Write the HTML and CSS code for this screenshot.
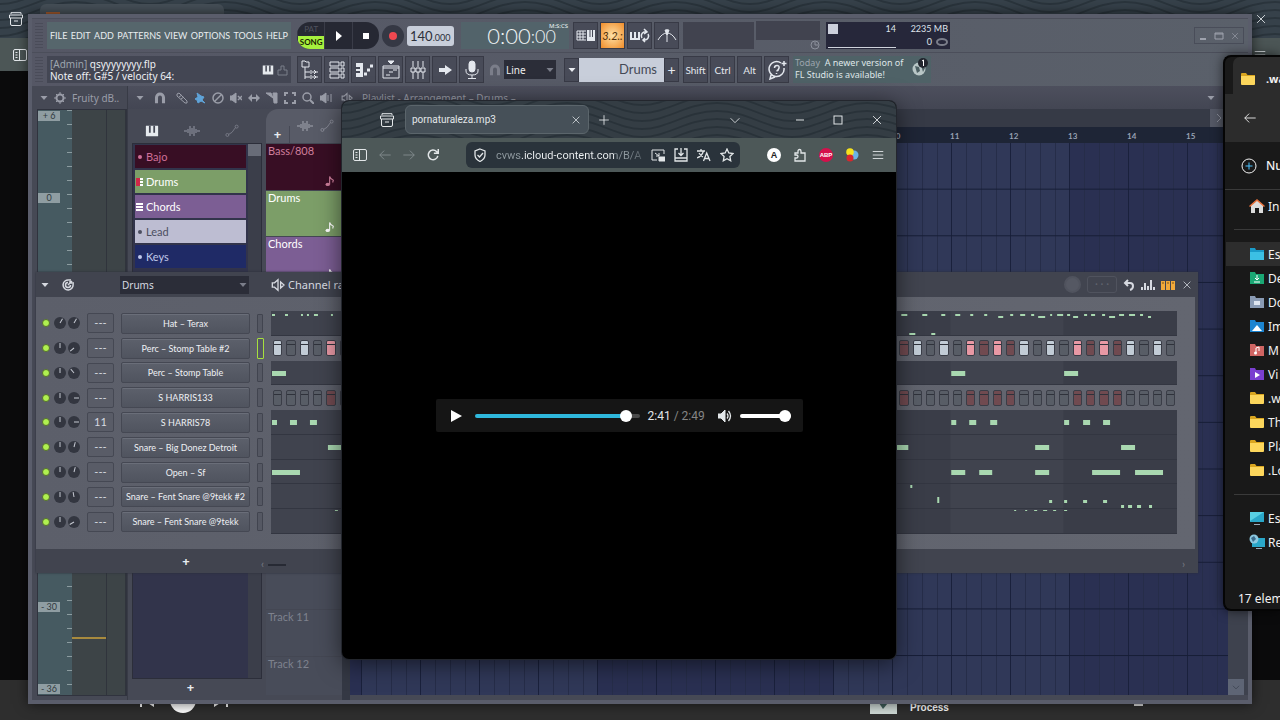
FILE: index.html
```html
<!DOCTYPE html>
<html lang="en">

<head>
    <meta charset="UTF-8">
    <meta name="viewport" content="width=device-width, initial-scale=1.0">
    <title>Desktop</title>
    <link rel="stylesheet" href="styles.css">
</head>

<body>
    <!-- shared icons -->
    <svg class="defs" aria-hidden="true">
        <defs>
            <pattern id="waves" width="150" height="38" patternUnits="userSpaceOnUse">
                <g fill="none" stroke="#222b32" stroke-width="2" opacity=".6">
                    <path d="M0 4C25 4 45-14 75-14S125 4 150 4M0 12C25 12 45-6 75-6S125 12 150 12M0 20C25 20 45 2 75 2S125 20 150 20M0 28C25 28 45 10 75 10S125 28 150 28M0 36C25 36 45 18 75 18S125 36 150 36M0 44C25 44 45 26 75 26S125 44 150 44M0 52C25 52 45 34 75 34S125 52 150 52" />
                </g>
            </pattern>
            <symbol id="i-archive" viewBox="0 0 16 16"><path d="M3 3V1.700h10V3M1.500 4h13v3h-13zM2.500 7v6q0 1.500 1.500 1.500h8q1.500 0 1.500-1.500V7M6 10h4" /></symbol>
            <symbol id="i-sidebar" viewBox="0 0 16 16"><rect x="1.500" y="2.500" width="13" height="11" rx="1.500" /><path d="M7.500 2.500v11M3.500 5.500h2M3.500 8h2M3.500 10.500h2" /></symbol>
            <symbol id="i-close" viewBox="0 0 16 16"><path d="M3.500 3.500l9 9M12.500 3.500l-9 9" /></symbol>
            <symbol id="i-menu" viewBox="0 0 16 16"><path d="M2 4h12M2 8h12M2 12h12" /></symbol>
            <symbol id="i-plus" viewBox="0 0 16 16"><path d="M8 2.500v11M2.500 8h11" /></symbol>
            <symbol id="i-left" viewBox="0 0 16 16"><path d="M14.500 8H2M7 3L2 8l5 5" /></symbol>
            <symbol id="i-right" viewBox="0 0 16 16"><path d="M1.500 8H14M9 3l5 5-5 5" /></symbol>
            <symbol id="i-down" viewBox="0 0 16 16"><path d="M3 6l5 5 5-5" /></symbol>
            <symbol id="i-caret" viewBox="0 0 16 16"><path d="M1 4h14l-7 8z" fill="currentColor" stroke="none" /></symbol>
            <symbol id="i-magnet" viewBox="0 0 16 16"><path d="M4 14V7.500a4 4 0 0 1 8 0V14" stroke-width="3.500" /></symbol>
            <symbol id="i-piano" viewBox="0 0 16 16"><path d="M1 2h14v12H1z" fill="currentColor" stroke="none" /><path d="M5.500 2v8M10.500 2v8" stroke="#444754" stroke-width="2" /></symbol>
            <symbol id="i-wave" viewBox="0 0 16 16"><path d="M0 8h3M13 8h3M4 6v4M6 3v10M8 5v6M10 3v10M12 6v4" stroke-width="1.500" /></symbol>
            <symbol id="i-auto" viewBox="0 0 16 16"><path d="M4 12q4-1 8-8" /><circle cx="2.700" cy="12.500" r="1.700" /><circle cx="13.300" cy="3" r="1.700" /></symbol>
            <symbol id="i-speaker" viewBox="0 0 16 16"><path d="M1.500 5.500H4L8 2v12L4 10.500H1.500zM11 4.500L15 8l-4 3.500z" stroke-width="1.500" /></symbol>
            <symbol id="i-note" viewBox="0 0 16 16"><ellipse cx="5" cy="12.500" rx="3" ry="2.300" fill="currentColor" stroke="none" /><path d="M7.500 12.500V2q1 3.500 5 5l-1 3" stroke-width="1.500" /></symbol>
            <symbol id="i-folder" viewBox="0 0 16 16"><path d="M1 3q0-1 1-1h4l1.500 2H15v9H1z" fill="#d9a520" stroke="none" /><path d="M1 5h14v8q0 1-1 1H2q-1 0-1-1z" fill="#fcd65c" stroke="none" /></symbol>
        </defs>
    </svg>

    <!-- browser at the back -->
    <div class="back">
        <header class="back-tabs">
            <svg class="waves"><rect width="100%" height="100%" fill="url(#waves)" /></svg>
            <svg class="icon i16 lit"><use href="#i-archive" /></svg>
            <span class="back-tab"><i></i></span>
            <button class="plain" aria-label="Close browser"><svg class="icon i14 lit"><use href="#i-close" /></svg></button>
        </header>
        <div class="back-nav">
            <svg class="icon i16 lit"><use href="#i-sidebar" /></svg>
            <svg class="icon i14 lit"><use href="#i-menu" /></svg>
        </div>
        <div class="back-page"></div>
        <footer class="back-player">
            <svg class="skip" viewBox="0 0 14 14"><path d="M0 0h2v14H0zM14 0v14L3 7z" fill="#fff" /></svg>
            <span class="disc"></span>
            <svg class="skip" viewBox="0 0 14 14"><path d="M12 0h2v14h-2zM0 0v14l11-7z" fill="#fff" /></svg>
            <svg class="cover" viewBox="0 0 27 27"><path d="M0 0h27v27H0z" fill="#cfdad6" /><path d="M9 16l4 6 5-6z" fill="#41605c" /></svg>
            <span class="song">Process</span>
            <span class="dash"></span>
        </footer>
    </div>

    <!-- FL Studio -->
    <main class="fl">
        <div class="toolbar">
            <div class="bar">
                <span class="grip"></span>
                <nav class="menu">
                    <button>FILE</button><button>EDIT</button><button>ADD</button><button>PATTERNS</button><button>VIEW</button><button>OPTIONS</button><button>TOOLS</button><button>HELP</button>
                </nav>
                <div class="transport">
                    <button class="mode"><span>PAT</span><b>SONG</b></button>
                    <button aria-label="Play"><svg class="i10" viewBox="0 0 10 10"><path d="M3 0l6 5-6 5z" fill="#fff" /></svg></button>
                    <button aria-label="Stop"><svg class="i10" viewBox="0 0 10 10"><path d="M2 2h6v6H2z" fill="#fff" /></svg></button>
                </div>
                <button class="record" aria-label="Record"><i></i></button>
                <div class="tempo">140<small>.000</small></div>
                <div class="clock">0:00<span>:00</span><sup>M:S:CS</sup></div>
                <div class="keys">
                    <button class="key" aria-label="Typing keyboard"><svg class="icon i20" viewBox="0 0 20 20"><path d="M1 5h9M1 8h9M1 11h9M1 14h9M1 5v9M4 5v9M7 5v9" /><path d="M11 4h8v11h-8z" fill="currentColor" stroke="none" /><path d="M14 4v7M16.500 4v7" stroke="#444754" /></svg></button>
                    <button class="key on" aria-label="Countdown">3.2.:</button>
                    <button class="key" aria-label="Loop record"><svg class="icon i20" viewBox="0 0 20 20"><path d="M1 6v7h8V6M5 6v7" stroke-width="2" /><path d="M12 12a4 4 0 0 1 2-6h2M18 8a4 4 0 0 1-3 6h-2M14 3l3 3-3 2M15 12l-2 2 2 2" stroke-width="1.500" /></svg></button>
                    <button class="key" aria-label="Metronome"><svg class="icon i20" viewBox="0 0 20 20"><path d="M1 14q4-7 9-7t9 7M10 3v13" /><path d="M8 4h4l-2 5z" fill="currentColor" /></svg></button>
                </div>
                <div class="scope"></div>
                <div class="scope-side"><span></span><svg class="icon i10" viewBox="0 0 10 10"><circle cx="5" cy="5" r="4" /><path d="M5 2v3h3" /></svg></div>
                <div class="cpu">
                    <span class="cpu-graph"><i></i><b>14</b></span>
                    <span class="cpu-mem"><b>2235 MB</b><b>0 <svg class="icon i12 dim" viewBox="0 0 12 12"><ellipse cx="6" cy="6" rx="5" ry="3" stroke-width="2" /></svg></b></span>
                </div>
                <div class="win-buttons">
                    <button aria-label="Minimize"><svg class="icon i10" viewBox="0 0 10 10"><path d="M2 8h6" stroke-width="2" /></svg></button>
                    <button aria-label="Maximize"><svg class="icon i10" viewBox="0 0 10 10"><path d="M1 2h8v6H1zM1 3h8" /></svg></button>
                    <button aria-label="Close"><svg class="icon i10"><use href="#i-close" /></svg></button>
                </div>
            </div>
            <div class="bar">
                <span class="grip"></span>
                <div class="hint">
                    <p><span>[Admin]</span> qsyyyyyyyy.flp<br>Note off: G#5 / velocity 64:</p>
                    <svg class="icon i12 lit"><use href="#i-piano" /></svg>
                    <svg class="icon i12 dim" viewBox="0 0 12 12"><path d="M2 11V6h3V2h3v4h3v5z" /></svg>
                </div>
                <div class="keys">
                    <button class="key" aria-label="Browser"><svg class="icon i20" viewBox="0 0 20 20"><path d="M2 1h3l1 1h3v5H2zM5 7v12M5 12h5M5 17h5M11 10v4M11 15v4M12 12h6M12 17h6M14 10l2 2-2 2M14 15l2 2-2 2" /></svg></button>
                    <button class="key" aria-label="Channel rack"><svg class="icon i20" viewBox="0 0 20 20"><path d="M3 2h9v4H3zM3 8h9v4H3zM3 14h9v4H3zM14 2h3v4h-3zM14 8h3v4h-3zM14 14h3v4h-3z" /></svg></button>
                    <button class="key" aria-label="Piano roll"><svg class="icon i20" viewBox="0 0 20 20"><path d="M2 3h7v14H2z" fill="currentColor" stroke="none" /><path d="M1 8h5M1 12h5" stroke="#444754" stroke-width="2" /><path d="M10 14h3M13 10h3M16 6h3" stroke-width="3" /></svg></button>
                    <button class="key" aria-label="Playlist"><svg class="icon i20" viewBox="0 0 20 20"><path d="M2 6h16v12H2zM2 8h16M5 15h4M8 12h4M12 10h4" /><path d="M7 1h6l-3 3z" fill="currentColor" /></svg></button>
                    <button class="key" aria-label="Mixer"><svg class="icon i20" viewBox="0 0 20 20"><path d="M5 1v6M5 12v7M10 1v6M10 12v7M15 1v6M15 12v7M3 8h4v4H3zM8 8h4v4H8zM13 8h4v4h-4z" /></svg></button>
                    <button class="key" aria-label="Next"><svg class="i20" viewBox="0 0 20 20"><path d="M4 8h6V5l7 5-7 5v-3H4z" fill="#e4e8ee" /></svg></button>
                    <button class="key" aria-label="Record audio"><svg class="icon i20" viewBox="0 0 20 20"><rect x="7" y="1" width="6" height="11" rx="3" fill="currentColor" /><path d="M4 9v2q0 4 6 4t6-4V9M10 15v3M6 18.500h8" /></svg></button>
                </div>
                <svg class="icon i14 dim"><use href="#i-magnet" /></svg>
                <div class="snap">
                    <select aria-label="Snap"><option>Line</option></select>
                    <svg class="i8"><use href="#i-caret" /></svg>
                </div>
                <div class="pattern">
                    <button aria-label="Pattern list"><svg class="i8"><use href="#i-caret" /></svg></button><span>Drums</span><button aria-label="Add pattern">+</button>
                </div>
                <div class="keys mods">
                    <button class="key">Shift</button>
                    <button class="key">Ctrl</button>
                    <button class="key">Alt</button>
                    <button class="key" aria-label="Help"><svg class="icon i20" viewBox="0 0 20 20"><path d="M14 3A7.500 7.500 0 1 0 17 8M4 15l-1 4 5-2M7.500 8q0-2.500 2.500-2.500T12 8t-2.500 3M9.500 13v1M17 1v5M14.500 3.500h5" stroke-width="1.500" /></svg></button>
                </div>
                <div class="news">
                    <p><span>Today</span>&nbsp; A newer version of<br>FL Studio is available!</p>
                    <svg class="i20" viewBox="0 0 20 20"><circle cx="8" cy="12" r="6.500" fill="#b8c6c6" /><path d="M4 9l4 1 1 4-3 2zM10 8l4 3-2 4z" fill="#4c5f62" /><circle cx="12" cy="6" r="5" fill="#22262e" /><path d="M11 4l1.500-1v6" stroke="#fff" fill="none" /></svg>
                </div>
            </div>
        </div>

        <div class="workspace">
            <section class="mixer">
                <header><svg class="i8"><use href="#i-caret" /></svg><svg class="icon i12" viewBox="0 0 12 12"><circle cx="6" cy="6" r="3.500" stroke-width="2" /><path d="M6 0v2M6 10v2M0 6h2M10 6h2M2 2l1 1M9 9l1 1M10 2L9 3M3 9l-1 1" /></svg>Fruity dB..</header>
                <div class="meter">
                    <ol><li>+ 6</li><li>0</li><li>- 6</li><li>- 12</li><li>- 18</li><li>- 24</li><li>- 30</li><li>- 36</li></ol>
                    <span class="level"><i></i></span>
                    <span class="level"></span>
                </div>
            </section>

            <section class="playlist">
                <header>
                    <svg class="i8"><use href="#i-caret" /></svg>
                    <svg class="icon i14"><use href="#i-magnet" /></svg>
                    <span class="tools">
                        <svg class="icon i12" viewBox="0 0 12 12"><path d="M1 2l2-1 8 8v2H9L1 4zM3 5l3-2M5 7l3-2" /></svg>
                        <svg class="icon i12 blue" viewBox="0 0 12 12"><path d="M3 1l4 3 3 1-2 3 3 3-4-2-3 2-1-3-2-1 3-2z" fill="currentColor" /></svg>
                        <svg class="icon i12" viewBox="0 0 12 12"><circle cx="6" cy="6" r="5" stroke-width="1.500" /><path d="M9.500 2.500l-7 7" stroke-width="1.500" /></svg>
                        <svg class="icon i12" viewBox="0 0 12 12"><path d="M0 4h2l4-3v10L2 8H0z" fill="currentColor" /><path d="M8 4l4 4M12 4L8 8" stroke-width="1.500" /></svg>
                        <svg class="icon i12" viewBox="0 0 12 12"><path d="M0 6l4-4v3h4V2l4 4-4 4V7H4v3z" fill="currentColor" stroke="none" /></svg>
                        <svg class="icon i12" viewBox="0 0 12 12"><path d="M0 1h5l2 5zM7 1h4v10H8z" fill="currentColor" /></svg>
                        <svg class="icon i12" viewBox="0 0 12 12"><path d="M1 4V1h3M8 1h3v3M11 8v3H8M4 11H1V8" stroke-width="2" /></svg>
                        <svg class="icon i12" viewBox="0 0 12 12"><circle cx="5" cy="5" r="4" stroke-width="1.500" /><path d="M8 8l4 4" stroke-width="2" /></svg>
                        <svg class="icon i12" viewBox="0 0 12 12"><path d="M0 4h2l4-3v10L2 8H0z" fill="currentColor" /><path d="M8 3v6M11 2v8" /></svg>
                    </span>
                    <svg class="icon i12"><use href="#i-speaker" /></svg>
                    <h2>Playlist - Arrangement – Drums –</h2>
                    <svg class="i8"><use href="#i-caret" /></svg>
                    <svg class="icon i10" viewBox="0 0 10 10"><path d="M1 3h8v6H1z" /></svg>
                </header>
                <div class="picker">
                    <div class="picker-tabs">
                        <svg class="icon i14 lit"><use href="#i-piano" /></svg>
                        <svg class="icon i16 dim"><use href="#i-wave" /></svg>
                        <svg class="icon i14 dim"><use href="#i-auto" /></svg>
                    </div>
                    <div class="picker-body">
                        <ul>
                            <li class="bajo"><i class="dot"></i>Bajo</li>
                            <li class="drums"><i class="roll"></i>Drums</li>
                            <li class="chords"><i class="roll"></i>Chords</li>
                            <li class="lead"><i class="dot"></i>Lead</li>
                            <li class="keys-p"><i class="dot"></i>Keys</li>
                        </ul>
                        <span class="picker-scroll"><i></i></span>
                    </div>
                    <div class="picker-foot"><button class="add" aria-label="Add pattern">+</button></div>
                </div>
                <div class="tracks">
                    <div class="track-tools"><button class="add" aria-label="Add track">+</button><svg class="icon i16"><use href="#i-wave" /></svg><svg class="icon i14"><use href="#i-auto" /></svg></div>
                    <ol id="tracks"></ol>
                </div>
                <div class="arrangement">
                    <div class="overview"><button aria-label="Scroll right"><svg class="icon i10" viewBox="0 0 10 10"><path d="M3 1l4 4-4 4" /></svg></button></div>
                    <div class="timeline" id="timeline"></div>
                    <div class="grid-area"><div class="bars"></div><div class="vscroll"><button aria-label="Scroll down"><svg class="icon i10"><use href="#i-down" /></svg></button></div></div>
                </div>
            </section>
        </div>
    </main>

    <!-- channel rack -->
    <section class="rack">
        <header>
            <svg class="i8"><use href="#i-caret" /></svg>
            <svg class="icon i12" viewBox="0 0 12 12"><path d="M7 1a5 5 0 1 0 4 4M6 3.500A2.500 2.500 0 1 0 8.500 6M6 6l4-4M8 0v4h4" stroke-width="1.500" /></svg>
            <div class="group">
                <select aria-label="Channel group"><option>Drums</option></select>
                <svg class="i8"><use href="#i-caret" /></svg>
            </div>
            <svg class="icon i14"><use href="#i-speaker" /></svg>
            <h2>Channel rack</h2>
            <div class="rack-tools">
                <span class="swing"></span>
                <span class="display">· · ·</span>
                <svg class="icon i12" viewBox="0 0 12 12"><path d="M3 4h4q3 0 3 3T7 11M5 1L2 4l3 3" stroke-width="2" /></svg>
                <svg class="icon i14" viewBox="0 0 14 14"><path d="M1 12V9M4 12V5M7 12V8M10 12V2M13 12V9" stroke-width="2" /></svg>
                <svg class="i14" viewBox="0 0 14 14"><path d="M0 3h4v9H0zM5 3h4v9H5zM10 3h4v9h-4z" fill="#f2a93a" /><path d="M1 5h2M6 5h2M11 5h2" stroke="#7c5417" /></svg>
                <button class="plain" aria-label="Close channel rack"><svg class="icon i12"><use href="#i-close" /></svg></button>
            </div>
        </header>
        <div class="channels" id="channels"></div>
        <footer><button class="add" aria-label="Add channel">+</button><span class="hprev">‹</span><span class="hbar"></span><span class="hnext">›</span></footer>
    </section>

    <!-- browser in front -->
    <section class="browser">
        <header class="tabs">
            <svg class="waves"><rect width="100%" height="100%" fill="url(#waves)" /></svg>
            <button class="plain" aria-label="Recent tabs"><svg class="icon i16"><use href="#i-archive" /></svg></button>
            <div class="tab"><span>pornaturaleza.mp3</span><button class="plain" aria-label="Close tab"><svg class="icon i12"><use href="#i-close" /></svg></button></div>
            <button class="plain" aria-label="New tab"><svg class="icon i14"><use href="#i-plus" /></svg></button>
            <span class="controls">
                <button class="plain list" aria-label="List tabs"><svg class="icon i14"><use href="#i-down" /></svg></button>
                <button class="plain" aria-label="Minimize window"><svg class="icon i12" viewBox="0 0 12 12"><path d="M2 6h8" /></svg></button>
                <button class="plain" aria-label="Maximize window"><svg class="icon i12" viewBox="0 0 12 12"><rect x="2" y="2" width="8" height="8" /></svg></button>
                <button class="plain" aria-label="Close window"><svg class="icon i14"><use href="#i-close" /></svg></button>
            </span>
        </header>
        <div class="nav">
            <button class="plain" aria-label="Sidebar"><svg class="icon i16"><use href="#i-sidebar" /></svg></button>
            <button class="plain off" aria-label="Back"><svg class="icon i14"><use href="#i-left" /></svg></button>
            <button class="plain off" aria-label="Forward"><svg class="icon i14"><use href="#i-right" /></svg></button>
            <button class="plain" aria-label="Reload"><svg class="icon i14" viewBox="0 0 16 16"><path d="M13.500 9A5.500 5.500 0 1 1 12 4l1.500 1.500M14 1v5H9" stroke-width="1.700" /></svg></button>
            <div class="url">
                <svg class="icon i14" viewBox="0 0 14 14"><path d="M7 1l5 2v4q0 4-5 6.500Q2 11 2 7V3zM4.500 7l2 2 3.500-4" stroke-width="1.300" /></svg>
                <input type="text" value="cvws.icloud-content.com/B/A" aria-label="Address">
                <svg class="icon i14" viewBox="0 0 14 14"><path d="M6 12H1V2h12v4M4 5l4 3M8 5v3H5" /><path d="M8 9h6v4H8z" fill="currentColor" /></svg>
                <svg class="icon i14" viewBox="0 0 14 14"><path d="M4 1H1v12h12V1h-3M7 0v7M4.500 5L7 7.500 9.500 5M1 10h12" stroke-width="1.300" /></svg>
                <svg class="icon i14" viewBox="0 0 14 14"><path d="M0 3h8M4 1v2M6.500 3Q5 8 0 10M2 5q2 3 4 4M6.500 13l3.200-8 3.300 8M8 10.500h4" stroke-width="1.300" /></svg>
                <svg class="icon i14" viewBox="0 0 14 14"><path d="M7 1l1.800 4 4.200.5-3.100 3 .8 4.300L7 10.700l-3.700 2.100.8-4.300L1 5.500 5.200 5z" stroke-width="1.300" /></svg>
            </div>
            <span class="ext">
                <span class="badge white">A</span>
                <svg class="icon i14" viewBox="0 0 14 14"><path d="M2 5h3V3a1.500 1.500 0 0 1 3 0v2h4v8H2v-3h1.500a1.500 1.500 0 0 0 0-3H2z" stroke-width="1.300" /></svg>
                <span class="badge red">ABP</span>
                <svg class="i14" viewBox="0 0 14 14"><circle cx="9" cy="7" r="4.500" fill="#6cb4e4" /><circle cx="5" cy="4" r="3.800" fill="#f6e21d" /><circle cx="5" cy="10" r="3.500" fill="#d8262c" /></svg>
                <svg class="icon i14"><use href="#i-menu" /></svg>
            </span>
        </div>
        <div class="page">
            <div class="player">
                <button class="plain" aria-label="Play audio"><svg class="i12" viewBox="0 0 12 12"><path d="M1 0l11 6-11 6z" fill="#fff" /></svg></button>
                <input type="range" class="seek" min="0" max="169" value="161" aria-label="Position">
                <span class="time">2:41 <i>/ 2:49</i></span>
                <button class="plain" aria-label="Mute"><svg class="icon i14" viewBox="0 0 14 14"><path d="M0 5h3l4-4v12L3 9H0z" fill="currentColor" /><path d="M9 4.500q2 2.500 0 5M10.500 2q4 5 0 10" stroke-width="1.300" /></svg></button>
                <input type="range" class="volume" min="0" max="100" value="100" aria-label="Volume">
            </div>
        </div>
    </section>

    <!-- file explorer -->
    <aside class="explorer">
        <div class="ex-tab"><svg class="i16"><use href="#i-folder" /></svg>.wa</div>
        <div class="ex-nav"><svg class="icon i14"><use href="#i-left" /></svg></div>
        <div class="ex-new"><svg class="icon i16" viewBox="0 0 16 16"><circle cx="8" cy="8" r="7" /><path d="M8 4.500v7M4.500 8h7" stroke="#4cc2ff" /></svg>Nu</div>
        <ul class="home">
            <li><svg class="i16" viewBox="0 0 16 16"><path d="M2 7l6-5 6 5v8h-4v-5H6v5H2z" fill="#dcdcdc" /><path d="M0 8l8-7 8 7-1 1-7-6-7 6z" fill="#e8703a" /></svg>Ini</li>
        </ul>
        <ul class="folders">
            <li class="sel"><svg class="i16" viewBox="0 0 16 16"><path d="M1 2h5l1 2h8v10H1z" fill="#1a9bc9" /><path d="M1 6h14v8H1z" fill="#3cc0e4" /></svg>Es</li>
            <li><svg class="i16" viewBox="0 0 16 16"><path d="M1 2h5l1 2h8v10H1z" fill="#1aa774" /><path d="M8 5v5M6 8l2 2 2-2M5 12h6" stroke="#fff" fill="none" /></svg>De</li>
            <li><svg class="i16" viewBox="0 0 16 16"><path d="M1 2h5l1 2h8v10H1z" fill="#8a9bb4" /><path d="M5 7h6v4H5z" fill="#dfe6f0" /></svg>Do</li>
            <li><svg class="i16" viewBox="0 0 16 16"><path d="M1 2h5l1 2h8v10H1z" fill="#1c84d0" /><path d="M3 13l5-6 5 6z" fill="#fff" /></svg>Im</li>
            <li><svg class="i16" viewBox="0 0 16 16"><path d="M1 2h5l1 2h8v10H1z" fill="#cf6563" /><path d="M7 11V6l3-1v4" stroke="#fff" fill="none" /><circle cx="6.500" cy="11" r="1.500" fill="#fff" /></svg>M</li>
            <li><svg class="i16" viewBox="0 0 16 16"><path d="M1 2h5l1 2h8v10H1z" fill="#7a3fd0" /><path d="M6 6l5 3-5 3z" fill="#fff" /></svg>Vi</li>
            <li><svg class="i16"><use href="#i-folder" /></svg>.w</li>
            <li><svg class="i16"><use href="#i-folder" /></svg>Th</li>
            <li><svg class="i16"><use href="#i-folder" /></svg>Pla</li>
            <li><svg class="i16"><use href="#i-folder" /></svg>.Lo</li>
        </ul>
        <ul class="devices">
            <li><svg class="i16" viewBox="0 0 16 16"><path d="M1 2h14v10H1z" fill="#2aa7c9" /><path d="M1 2h14l-14 9z" fill="#58d0e4" /><path d="M5 14h6v1H5z" fill="#9ab" /></svg>Es</li>
            <li><svg class="i16" viewBox="0 0 16 16"><path d="M3 4h13v9H3z" fill="#2aa7c9" /><circle cx="5" cy="5" r="4.500" fill="#8cc8e0" /><path d="M2 4l3-2 2 3-3 3z" fill="#3c6c8c" /><path d="M7 14h6v1H7z" fill="#9ab" /></svg>Re</li>
        </ul>
        <footer>17 elem</footer>
    </aside>

    <script src="script.js"></script>
</body>

</html>
```
FILE: styles.css
```css
* {
    box-sizing: border-box;
    margin: 0;
    padding: 0;
}

body {
    position: relative;
    height: 100vh;
    overflow: hidden;
    background: #0b0b0c;
    color: #d6d9e0;
    font-family: "Noto Sans", "Open Sans", sans-serif;
    font-size: 11px;
}

button,
select,
input {
    font: inherit;
    color: inherit;
    border: none;
    background: none;
}

ul,
ol {
    list-style: none;
}

svg {
    display: block;
    flex: none;
}

.defs {
    position: absolute;
    width: 0;
    height: 0;
}

.icon {
    fill: none;
    stroke: currentColor;
}

.i8 { width: 8px; height: 8px; }
.i10 { width: 10px; height: 10px; }
.i12 { width: 12px; height: 12px; }
.i14 { width: 14px; height: 14px; }
.i16 { width: 16px; height: 16px; }
.i20 { width: 20px; height: 20px; }
.lit { color: #e6eaee; }
.dim { color: #7b7e8a; }
.blue { color: #5fa3d8; }

.plain {
    display: flex;
    align-items: center;
    justify-content: center;
}

.waves {
    position: absolute;
    inset: 0;
    width: 100%;
    height: 100%;
    z-index: -1;
}

/* ---- browser at the back ---- */
.back {
    position: absolute;
    inset: 0;
    display: flex;
    flex-direction: column;
}

.back-tabs {
    position: relative;
    z-index: 0;
    display: flex;
    align-items: center;
    height: 38px;
    padding: 0 12px 0 8px;
    background: #36414a;
}

.back-tab {
    align-self: flex-end;
    width: 184px;
    height: 34px;
    margin: 0 auto 0 16px;
    padding: 8px 6px;
    border-radius: 6px;
    background: #465058;
}

.back-tab i {
    display: block;
    width: 14px;
    height: 10px;
    background: #a45a2c;
}

.back-nav {
    display: flex;
    align-items: center;
    justify-content: space-between;
    height: 33px;
    padding: 0 13px 0 12px;
    background: #4c5656;
}

.back-page {
    flex: 1;
}

.back-player {
    display: flex;
    align-items: center;
    height: 40px;
    padding-left: 140px;
    background: #2e2e2e;
    color: #fff;
}

.skip {
    width: 14px;
    height: 14px;
}

.disc {
    width: 26px;
    height: 26px;
    margin: 0 18px 0 16px;
    border-radius: 50%;
    background: #fff;
}

.cover {
    width: 27px;
    height: 27px;
    margin-left: 642px;
}

.song {
    margin-left: 13px;
    padding-top: 16px;
    font: bold 10px/16px "Liberation Sans", sans-serif;
}

.dash {
    width: 9px;
    height: 12px;
    margin-left: 185px;
    background: #ddd;
}

/* ---- FL Studio ---- */
.fl {
    position: absolute;
    inset: 14px 28px 16px;
    display: flex;
    flex-direction: column;
    padding: 4px;
    background: #5a5d6b;
    box-shadow: 0 0 12px rgba(0, 0, 0, .6);
    font-family: Lato, sans-serif;
}

.toolbar {
    background: linear-gradient(90deg, #555765, #5a606a);
}

.bar {
    display: flex;
    align-items: center;
    height: 34px;
    border: 1px solid #4b4e5a;
    border-width: 1px 0 0;
}

.grip {
    width: 8px;
    height: 26px;
    margin: 0 4px 0 3px;
    background: repeating-linear-gradient(#4a4c59 0 1px, transparent 1px 3px);
}

.menu,
.hint {
    display: flex;
    align-items: center;
    width: 244px;
    height: 27px;
    margin-right: 6px;
}

.menu {
    justify-content: space-between;
    padding: 0 3px;
    background: #56666c;
    font-size: 9px;
    color: #e8edef;
}

.hint {
    padding: 0 3px;
    gap: 2px;
    background: #434653;
    font: 10px/12px "Noto Sans", sans-serif;
    color: #eef0f4;
}

.hint p {
    flex: 1;
}

.hint span,
.news span {
    color: #9da5ae;
}

.transport {
    display: flex;
    width: 82px;
    height: 27px;
    overflow: hidden;
    border-radius: 13px;
    background: #262833;
}

.transport button {
    flex: 1;
    display: flex;
    align-items: center;
    justify-content: center;
    border-left: 1px solid #3a3c48;
}

.transport .mode {
    flex-direction: column;
    min-width: 0;
    font-size: 8px;
    line-height: 13px;
    color: #50535f;
}

.mode b {
    width: 100%;
    color: #162000;
    background: #a6f03e;
}

.record {
    display: grid;
    place-items: center;
    width: 22px;
    height: 22px;
    margin: 0 3px;
    border-radius: 50%;
    background: #353844;
}

.record i {
    width: 8px;
    height: 8px;
    border-radius: 50%;
    background: #f04850;
}

.tempo {
    width: 47px;
    height: 20px;
    margin-right: 7px;
    padding-left: 3px;
    border-radius: 3px;
    background: #c8ceda;
    color: #2c303a;
    font-size: 13px;
    line-height: 20px;
    white-space: nowrap;
}

.tempo small {
    font-size: 9px;
}

.clock {
    display: flex;
    align-items: center;
    justify-content: flex-end;
    width: 108px;
    height: 27px;
    margin-right: 4px;
    background: #52636a;
    color: #eef3f5;
    font-size: 22px;
    font-weight: 300;
}

.clock span {
    font-size: 18px;
}

.clock sup {
    align-self: flex-start;
    width: 12px;
    margin-right: 1px;
    font: 6px/8px "Noto Sans", sans-serif;
    direction: rtl;
    white-space: nowrap;
}

.keys {
    display: flex;
    gap: 2px;
    margin-right: 4px;
}

.key {
    display: grid;
    place-items: center;
    width: 25px;
    height: 27px;
    border: 1px solid #383a46;
    background: #484b58;
    color: #e4e8ee;
}

.key.on {
    background: radial-gradient(#ffe2a8, #f08c28);
    color: #543008;
    font-size: 11px;
    font-style: italic;
}

.scope {
    width: 71px;
    height: 27px;
    background: #41434f;
}

.scope-side {
    display: flex;
    flex-direction: column;
    align-items: flex-end;
    width: 64px;
    margin: 0 6px 0 2px;
    color: #8c919c;
}

.scope-side span {
    width: 100%;
    height: 19px;
    background: #41434f;
}

.cpu {
    display: flex;
    width: 124px;
    height: 27px;
    padding: 0 2px;
    background: #26273a;
    color: #dfe3ea;
    font-size: 9px;
    line-height: 14px;
}

.cpu b {
    display: flex;
    justify-content: flex-end;
    align-items: center;
    gap: 4px;
    height: 13px;
    font-weight: normal;
}

.cpu-graph {
    display: flex;
    justify-content: space-between;
    width: 68px;
    height: 26px;
    border-bottom: 1px solid #cfd3dc;
}

.cpu-graph i {
    width: 10px;
    height: 10px;
    margin-top: 2px;
    background: #ccd0dc;
}

.cpu-mem {
    flex: 1;
}

.win-buttons {
    display: flex;
    margin: 0 4px 0 auto;
    border: 1px solid #494d59;
    color: #9ea2ad;
}

.win-buttons button {
    display: grid;
    place-items: center;
    width: 16px;
    height: 15px;
}

.snap,
.group {
    display: flex;
    align-items: center;
    padding-right: 2px;
    background: #2b2d38;
    font: 10px "Noto Sans", sans-serif;
}

.snap {
    width: 52px;
    height: 19px;
    margin: 0 8px 0 2px;
    color: #eee;
}

.snap select,
.group select {
    flex: 1;
    min-width: 0;
    padding-left: 2px;
    appearance: none;
}

.snap svg,
.group svg {
    color: #7b7e8a;
}

.pattern {
    display: flex;
    height: 24px;
    margin-right: 4px;
    color: #e8ebf0;
    font-size: 14px;
}

.pattern button {
    display: grid;
    place-items: center;
    width: 15px;
    border: 1px solid #383a46;
    background: #484b58;
}

.pattern span {
    width: 85px;
    padding-right: 7px;
    background: #c8ceda;
    color: #444955;
    font-size: 13px;
    line-height: 23px;
    text-align: right;
}

.mods {
    font-size: 10px;
}

.news {
    display: flex;
    width: 138px;
    height: 27px;
    padding: 1px 0 0 2px;
    background: #4f6267;
    color: #dfe6e8;
    font: 9px/12px "Noto Sans", sans-serif;
    white-space: nowrap;
}

.news p {
    flex: 1;
    min-width: 0;
}

.workspace {
    flex: 1;
    min-height: 0;
    display: flex;
    background: #464955;
}

.mixer {
    display: flex;
    flex-direction: column;
    width: 96px;
    padding: 0 0 4px 5px;
    border-right: 1px solid #383b46;
}

.mixer header,
.playlist header {
    display: flex;
    align-items: center;
    height: 23px;
    gap: 6px;
    padding-left: 3px;
    color: #9a9da8;
    font: 10px "Noto Sans", sans-serif;
    white-space: nowrap;
}

.meter {
    flex: 1;
    display: flex;
    border: 1px solid #30333e;
}

.meter ol {
    display: flex;
    flex-direction: column;
    justify-content: space-between;
    width: 34px;
    padding: 1px 0;
    background: repeating-linear-gradient(#8c9ca0 0 1px, transparent 1px 14px) right / 5px 100% no-repeat, #465a61;
}

.meter li {
    width: 22px;
    background: #8f9da2;
    color: #303a40;
    font-size: 9px;
    line-height: 10px;
    text-align: center;
}

.level {
    position: relative;
    width: 35px;
    border-right: 1px solid #30343c;
    background: #3d4447;
}

.level i {
    position: absolute;
    top: 90%;
    width: 100%;
    height: 2px;
    background: #a88a3e;
}

.level:last-child {
    flex: 1;
}

.playlist {
    flex: 1;
    min-width: 0;
    display: grid;
    grid-template: 23px minmax(0, 1fr) / 138px 84px 1fr;
}

.playlist header {
    grid-column: 1 / -1;
    gap: 9px;
    padding: 0 14px 0 8px;
    background: linear-gradient(#4d4f5d, #434653);
}

.tools {
    display: flex;
    gap: 6px;
}

.playlist h2 {
    flex: 1;
    font-size: 10px;
    font-weight: normal;
}

.picker {
    display: flex;
    flex-direction: column;
    padding: 0 4px 4px;
}

.picker-tabs {
    display: flex;
    align-items: center;
    justify-content: space-around;
    height: 34px;
    padding: 10px 10px 0 0;
}

.picker-body {
    flex: 1;
    display: flex;
    background: #32344b;
    border: 1px solid #2c2e3a;
}

.picker-body ul {
    flex: 1;
    display: flex;
    flex-direction: column;
    gap: 2px;
    padding: 1px 2px;
}

.picker-body li {
    display: flex;
    align-items: center;
    gap: 4px;
    height: 23px;
    padding-left: 3px;
    font-size: 11px;
}

.dot {
    width: 4px;
    height: 4px;
    border-radius: 50%;
    background: currentColor;
}

.roll {
    width: 7px;
    height: 8px;
    margin: 0 -1px 0 -2px;
    background: repeating-linear-gradient(currentColor 0 2px, transparent 2px 3px);
}

.drums .roll {
    border-left: 4px solid #d02848;
}

.bajo { background: #380e24; color: #cf6f98; }
.drums { background: #7c9e68; color: #fff; }
.chords { background: #7c5e94; color: #fff; }
.lead { background: #bdbdd2; color: #4c4e60; }
.keys-p { background: #1f2a66; color: #c0c8ea; }

.picker-scroll {
    width: 13px;
    background: #3b3e4a;
}

.picker-scroll i {
    display: block;
    height: 12px;
    background: #686c78;
}

.picker-foot {
    display: flex;
    justify-content: center;
    padding-right: 13px;
}

.add {
    align-self: center;
    width: 24px;
    height: 17px;
    color: #e8ebf0;
    font: bold 13px/17px "Noto Sans", sans-serif;
}

.tracks {
    display: flex;
    flex-direction: column;
    min-height: 0;
    padding-bottom: 5px;
    border-right: 8px solid #343844;
}

.track-tools {
    display: flex;
    align-items: center;
    gap: 7px;
    height: 34px;
    border-radius: 12px 0 0;
    background: #585b67;
    color: #8b8e99;
}

.track-tools .add {
    align-self: flex-end;
    border-right: 1px solid #464955;
}

.tracks ol {
    flex: 1;
    min-height: 0;
    display: grid;
    grid-auto-rows: 8.45%;
    overflow: hidden;
    background: #484c59;
}

.tracks li {
    display: flex;
    justify-content: space-between;
    padding: 0 6px 3px 2px;
    border-top: 1px solid #444753;
    color: #7e828e;
    font-size: 11px;
}

.tracks li svg {
    align-self: flex-end;
}

.tracks .bass { background: #380e24; color: #cf7f9c; }
.tracks .drums { background: #7c9e68; color: #fff; }
.tracks .chords { background: #7c5e94; color: #fff; }

.arrangement {
    display: flex;
    flex-direction: column;
    min-width: 0;
    padding-bottom: 5px;
}

.overview {
    display: flex;
    justify-content: flex-end;
    height: 18px;
    padding-right: 20px;
    background: #363a46;
}

.overview button {
    display: grid;
    place-items: center;
    width: 18px;
    background: #545865;
    color: #888c98;
}

.timeline {
    display: flex;
    height: 16px;
    padding-left: 10px;
    overflow: hidden;
    background: #1e2536;
}

.timeline span {
    flex: none;
    width: 59px;
    color: #98a2b4;
    font: bold 8px/18px Lato, sans-serif;
}

.grid-area {
    flex: 1;
    display: flex;
}

.bars {
    flex: 1;
    background:
        linear-gradient(transparent calc(100% - 1px), #161d36 0) 0 0 / 100% 8.45%,
        linear-gradient(90deg, #1a213c 1px, transparent 0) 11px 0 / 59px 100%,
        repeating-linear-gradient(90deg, #262d49 0 1px, transparent 1px 15px) 11px 0 / 59px 100%,
        linear-gradient(90deg, #303858 50%, #2a3052 0) 11px 0 / 472px 100%;
}

.vscroll {
    display: flex;
    align-items: flex-end;
    width: 20px;
    padding-right: 4px;
    background: #3e424e;
}

.vscroll button {
    display: grid;
    place-items: center;
    width: 16px;
    height: 16px;
    background: #5e6575;
    color: #333a48;
}

/* ---- channel rack ---- */
.rack {
    position: absolute;
    inset: 272px 82px 147px 36px;
    display: flex;
    flex-direction: column;
    padding-right: 3px;
    background: #41444f;
    box-shadow: 0 0 2px #2b2d38;
    color: #d6d9e0;
    font-family: Lato, sans-serif;
}

.rack header {
    flex: none;
    display: flex;
    align-items: center;
    height: 25px;
    padding: 0 2px 0 5px;
}

.rack header > .i12 {
    margin-left: 13px;
}

.group {
    width: 129px;
    height: 18px;
    margin: 0 22px 0 46px;
}

.rack h2 {
    flex: 1;
    margin-left: 3px;
    font: 11px "Noto Sans", sans-serif;
}

.rack-tools {
    display: flex;
    align-items: center;
    gap: 6px;
}

.swing {
    width: 17px;
    height: 17px;
    border: 2px solid #50535e;
    border-radius: 50%;
    background: #555863;
}

.display {
    width: 30px;
    height: 17px;
    border: 1px solid #50535e;
    border-radius: 3px;
    color: #60636e;
    text-align: center;
}

.channels {
    flex: 1;
    min-height: 0;
    display: grid;
    grid-auto-rows: minmax(0, 1fr);
    padding: 14px 18px 15px 6px;
    background: linear-gradient(90deg, #5c5f6a, #636670);
}

.channel {
    display: grid;
    grid-template-columns: 38px 27px 129px 7px 1fr;
    grid-template-rows: 100%;
    column-gap: 7px;
    align-items: center;
}

.controls-l {
    display: flex;
    align-items: center;
    gap: 2px;
}

.led {
    width: 8px;
    height: 8px;
    margin-right: 2px;
    border: 1px solid #55702c;
    border-radius: 50%;
    background: #b0f050;
}

.knob {
    width: 12px;
    height: 12px;
}

.target {
    height: 20px;
    border: 1px solid #454853;
    border-radius: 2px;
    background: #595c67;
    line-height: 18px;
    text-align: center;
}

.name {
    height: 21px;
    overflow: hidden;
    border: 1px solid #454853;
    border-radius: 2px;
    background: linear-gradient(#5c606b, #50545f);
    box-shadow: inset 0 1px #6a6e79;
    font-size: 9px;
    line-height: 19px;
    white-space: nowrap;
    color: #eef0f4;
}

.slot {
    width: 6px;
    height: 19px;
    border: 1px solid #41444f;
    border-radius: 1px;
    background: #555863;
}

.slot.sel {
    width: 7px;
    height: 21px;
    border-color: #a6e03e;
}

.lane {
    width: 100%;
    height: 100%;
    overflow: hidden;
    border-bottom: 1px solid #333641;
    background: linear-gradient(90deg, #40434e 50%, #3a3d48 0) 0 0 / 25% 100%;
}

.steps {
    display: flex;
    align-items: center;
    height: 100%;
}

.steps input {
    flex: 1;
    min-width: 0;
    height: 16px;
    margin: 0 2px;
    appearance: none;
    border: 1px solid #3a3d47;
    border-radius: 2px;
    background: linear-gradient(transparent 3px, #2f323b 3px 4px, transparent 4px), #585d66;
}

.steps input:checked { background-color: #c2ccd6; }
.steps .alt { background-color: #704a50; }
.steps .alt:checked { background-color: #e898a4; }

.rack footer {
    flex: none;
    display: flex;
    align-items: center;
    height: 24px;
    padding-left: 138px;
    color: #777b86;
}

.hprev {
    margin: 4px 4px 0 63px;
}

.hbar {
    width: 18px;
    height: 2px;
    margin-top: 8px;
    background: #272a34;
}

.hnext {
    margin: 4px 10px 0 auto;
}

/* ---- browser in front ---- */
.browser {
    position: absolute;
    inset: 101px 384px 61px 342px;
    display: flex;
    flex-direction: column;
    overflow: hidden;
    border-radius: 7px;
    background: #000;
    box-shadow: 0 0 0 1px #23262d, 0 4px 24px rgba(0, 0, 0, .6);
    color: #e2e6e8;
    font-family: Roboto, sans-serif;
}

.tabs {
    position: relative;
    z-index: 0;
    display: flex;
    align-items: center;
    height: 37px;
    padding: 0 12px 0 37px;
    background: #343d44;
}

.tab {
    display: flex;
    align-items: center;
    justify-content: space-between;
    width: 184px;
    height: 29px;
    margin: 0 8px 0 10px;
    padding: 0 6px;
    border: 1px solid #5b656b;
    border-radius: 6px;
    background: #465058;
    font-size: 10px;
}

.controls {
    display: flex;
    gap: 26px;
    margin-left: auto;
}

.list {
    margin-right: 26px;
}

.nav {
    display: flex;
    align-items: center;
    gap: 10px;
    height: 34px;
    padding: 0 11px 0 10px;
    background: #4d5858;
}

.off {
    color: #858e90;
}

.url {
    display: flex;
    align-items: center;
    gap: 9px;
    width: 274px;
    height: 26px;
    margin-left: 16px;
    padding: 0 6px 0 7px;
    border-radius: 6px;
    background: #2a333b;
}

.url input {
    flex: 1;
    min-width: 0;
    font-size: 11px;
    color: transparent;
    background: linear-gradient(90deg, #909aa0 25px, #f0f3f5 25px 118px, #909aa0 118px 130px, #2a333b 156px);
    background-clip: text;
}

.ext {
    display: flex;
    align-items: center;
    gap: 12px;
    margin-left: auto;
}

.badge {
    width: 14px;
    height: 14px;
    border-radius: 50%;
    font: bold 9px/14px "Liberation Sans", sans-serif;
    text-align: center;
}

.white { background: #fff; color: #222; }
.red { background: #d5104c; color: #fff; font-size: 6px; }

.page {
    flex: 1;
    display: grid;
    place-items: center;
}

.player {
    display: flex;
    align-items: center;
    width: 367px;
    height: 33px;
    padding: 0 12px 0 14px;
    border-radius: 2px;
    background: #151515;
}

.player input {
    height: 12px;
    appearance: none;
}

.player input::-webkit-slider-runnable-track {
    height: 4px;
    border-radius: 2px;
    background: linear-gradient(90deg, #2fb8dc 92%, #4a4a4a 0);
}

.player .volume::-webkit-slider-runnable-track {
    background: #fff;
}

.player input::-webkit-slider-thumb {
    width: 12px;
    height: 12px;
    margin-top: -4px;
    appearance: none;
    border-radius: 50%;
    background: #fff;
}

.seek {
    width: 165px;
    margin: 0 8px 0 13px;
}

.time {
    flex: 1;
    font-size: 12px;
    white-space: nowrap;
}

.time i {
    font-style: normal;
    color: #858585;
}

.volume {
    width: 51px;
    margin-left: 8px;
}

/* ---- file explorer ---- */
.explorer {
    position: absolute;
    inset: 55px 0 109px 1223px;
    display: flex;
    flex-direction: column;
    overflow: hidden;
    border: 1px solid #050505;
    border-width: 2px 0 2px 2px;
    border-radius: 8px 0 0 8px;
    background: #191919;
    box-shadow: 0 0 12px rgba(0, 0, 0, .6);
    color: #f2f2f2;
    font-size: 12px;
    white-space: nowrap;
}

.ex-tab,
.ex-nav,
.ex-new,
.explorer li {
    display: flex;
    align-items: center;
}

.ex-tab {
    gap: 10px;
    height: 37px;
    margin-left: 8px;
    padding: 6px 0 0 7px;
    border-radius: 7px 0 0;
    background: #2c2c2c;
    font-size: 11px;
    font-weight: bold;
}

.ex-nav {
    height: 48px;
    padding-left: 18px;
    background: #2c2c2c;
}

.ex-new {
    gap: 9px;
    height: 48px;
    padding-left: 16px;
    border-bottom: 1px solid #3a3a3a;
    font-weight: 500;
}

.explorer li {
    gap: 3px;
    height: 24px;
    padding-left: 24px;
}

.home {
    height: 39px;
    padding: 4px 0;
}

.folders,
.devices {
    margin-left: 9px;
    padding: 12px 0;
    border-top: 1px solid #3a3a3a;
}

.explorer .folders li,
.explorer .devices li {
    padding-left: 15px;
}

.folders .sel {
    margin-left: -8px;
    background: #2d2d2d;
}

.explorer .folders .sel {
    padding-left: 23px;
}

.devices {
    padding-top: 11px;
}

.explorer footer {
    margin-top: auto;
    padding: 0 0 2px 13px;
}
```
FILE: script.js
```js
// notes are [x, y, width, height] on a 907 x 25 lane
const row = (y, h, ...pairs) => pairs.map(([x, w]) => [x, y, w, h]);

// a and b are the angles of the pan and volume knobs
const channels = [
    { name: 'Hat – Terax', a: 30, b: 30, notes: [
        ...row(3, 2, [1, 3], [14, 3], [30, 2], [36, 2], [43, 4], [60, 2], [631, 6], [652, 5], [671, 4], [685, 5], [700, 3], [714, 3], [740, 3], [750, 5], [761, 3], [780, 2], [787, 6], [797, 3], [814, 3], [821, 4], [832, 3], [849, 5], [859, 6], [870, 3]),
        ...row(5, 2, [728, 5], [768, 7], [803, 5], [839, 6], [878, 3]),
        ...row(22, 2, [639, 6], [661, 4])] },
    { name: 'Perc – Stomp Table #2', a: 0, b: 230, sel: true, steps: i => i % 2 === 0 },
    { name: 'Perc – Stomp Table', a: 0, b: 320, notes: row(10, 5, [1, 14], [681, 14], [794, 14]) },
    { name: 'S HARRIS133', a: 0, b: 90, steps: () => false },
    { name: 'S HARRIS78', a: 0, b: 90, to: '11', notes: row(10, 5, [1, 5], [19, 7], [39, 7], [681, 5], [699, 7], [720, 7], [794, 5], [813, 7], [833, 7]) },
    { name: 'Snare – Big Donez Detroit', a: 0, b: 15, notes: row(10, 5, [57, 14], [624, 14], [765, 14], [851, 14]) },
    { name: 'Open – Sf', a: 0, b: 15, notes: row(10, 5, [1, 28], [681, 14], [709, 13], [765, 14], [822, 28], [865, 28]) },
    { name: 'Snare – Fent Snare @9tekk #2', a: 0, b: 350, notes: [
        [640, 1, 2, 3], [667, 13, 2, 6],
        ...row(16, 3, [779, 3], [794, 3], [813, 4], [833, 4]),
        ...row(21, 3, [851, 3], [858, 4], [867, 4], [879, 3])] },
    { name: 'Snare – Fent Snare @9tekk', a: 0, b: 240, notes: row(1, 1, [64, 3], [744, 2], [755, 2], [764, 3], [773, 4], [783, 3], [794, 3]) }
];

const knob = a => `<svg class="knob" viewBox="0 0 12 12"><circle cx="6" cy="6" r="6" fill="#333640"/><path d="M6 6V1" stroke="#c6cad2" transform="rotate(${a} 6 6)"/></svg>`;

function lane(c) {
    if (c.steps) {
        let pads = '';
        for (let i = 0; i < 68; i++) {
            pads += `<input type="checkbox" aria-label="Step ${i + 1}"${i % 8 > 3 ? ' class="alt"' : ''}${c.steps(i) ? ' checked' : ''}>`;
        }
        return `<div class="steps">${pads}</div>`;
    }
    const rects = c.notes.map(([x, y, w, h]) => `<rect x="${x / 9.07}%" y="${y}" width="${w / 9.07}%" height="${h}" fill="#a9d8b0"/>`);
    return `<svg class="lane">${rects.join('')}</svg>`;
}

document.getElementById('channels').innerHTML = channels.map(c => `
    <div class="channel">
        <span class="controls-l"><i class="led"></i>${knob(c.a)}${knob(c.b)}</span>
        <span class="target">${c.to || '---'}</span>
        <button class="name">${c.name}</button>
        <i class="slot${c.sel ? ' sel' : ''}"></i>
        ${lane(c)}
    </div>`).join('');

// tracks 4 to 10 have no name
const tracks = [['Bass/808', 'bass'], ['Drums', 'drums'], ['Chords', 'chords']];
for (let i = 4; i <= 12; i++) tracks.push([i > 10 ? 'Track ' + i : '', '']);
document.getElementById('tracks').innerHTML = tracks.map(([name, cls]) =>
    `<li class="${cls}">${name}${cls ? '<svg class="icon i12"><use href="#i-note"/></svg>' : ''}</li>`).join('');

let bars = '';
for (let i = 1; i <= 15; i++) bars += `<span>${i}</span>`;
document.getElementById('timeline').innerHTML = bars;
```
